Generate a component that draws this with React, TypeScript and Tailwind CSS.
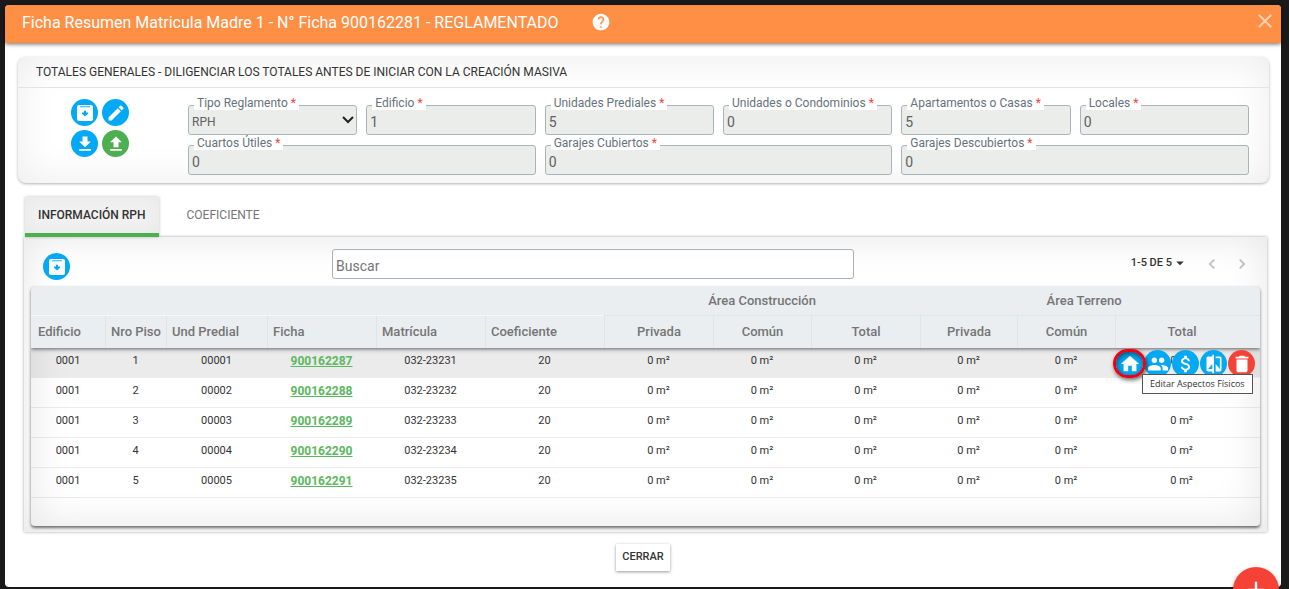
import type { ReactNode } from "react";
import clsx from "clsx";
import {
  MdAdd,
  MdArrowDropDown,
  MdAttachMoney,
  MdChevronLeft,
  MdChevronRight,
  MdClose,
  MdCompare,
  MdDelete,
  MdEdit,
  MdFileDownload,
  MdFileUpload,
  MdGroup,
  MdHelp,
  MdHome,
} from "react-icons/md";

const rows = [
  { edificio: "0001", piso: "1", und: "00001", ficha: "900162287", matricula: "032-23231", coef: "20" },
  { edificio: "0001", piso: "2", und: "00002", ficha: "900162288", matricula: "032-23232", coef: "20" },
  { edificio: "0001", piso: "3", und: "00003", ficha: "900162289", matricula: "032-23233", coef: "20" },
  { edificio: "0001", piso: "4", und: "00004", ficha: "900162290", matricula: "032-23234", coef: "20" },
  { edificio: "0001", piso: "5", und: "00005", ficha: "900162291", matricula: "032-23235", coef: "20" },
];

const textFields = [
  { id: "edificio", label: "Edificio", value: "1" },
  { id: "unidades", label: "Unidades Prediales", value: "5" },
  { id: "condominios", label: "Unidades o Condominios", value: "0" },
  { id: "apartamentos", label: "Apartamentos o Casas", value: "5" },
  { id: "locales", label: "Locales", value: "0" },
  { id: "cuartos", label: "Cuartos Útiles", value: "0", wide: true },
  { id: "cubiertos", label: "Garajes Cubiertos", value: "0", wide: true },
  { id: "descubiertos", label: "Garajes Descubiertos", value: "0", wide: true },
];

const areas = ["Privada", "Común", "Total", "Privada", "Común", "Total"];

function ArchiveIcon() {
  return (
    <svg viewBox="0 0 18 18" className="size-[18px]" fill="none" aria-hidden>
      <rect x="1" y="1" width="16" height="16" rx="2" fill="#fff" />
      <path d="M4 2.8h10" stroke="#03a9f4" strokeWidth=".9" />
      <path d="M8 6.8h2v1.7h2v1.2L9 12.4 6 9.700V8.500h2z" fill="#03a9f4" />
    </svg>
  );
}

function RoundButton({ label, color = "blue", children }: { label: string; color?: "blue" | "green" | "red"; children: ReactNode }) {
  return (
    <button
      type="button"
      aria-label={label}
      className={clsx(
        "flex size-[27px] shrink-0 items-center justify-center rounded-full text-white",
        color === "blue" && "bg-[#03a9f4]",
        color === "green" && "bg-[#4caf50]",
        color === "red" && "bg-[#f44336]",
      )}
    >
      {children}
    </button>
  );
}

function Field({ id, label, wide, children }: { id: string; label: string; wide?: boolean; children: ReactNode }) {
  return (
    <div className={clsx("relative", wide && "col-span-2")}>
      {children}
      <label htmlFor={id} className="absolute -top-2 left-1.5 bg-white px-[3px] text-[12px] leading-[13px] whitespace-nowrap text-[#66727b]">
        {label} <span className="text-[#f44336]">*</span>
      </label>
    </div>
  );
}

const control = "block h-[30px] w-full rounded-[3px] border border-[#a9b3ba] bg-[#eaedea] px-[3px] text-[#616161] outline-none";

function Totals() {
  return (
    <section className="rounded-lg bg-white shadow-[0_1px_3px_rgba(0,0,0,.3),inset_0_0_40px_rgba(0,0,0,.08)]">
      <h2 className="border-b border-[#e4e4e4] px-[18px] text-[12px] leading-[30px] text-[#333]">
        TOTALES GENERALES - DILIGENCIAR LOS TOTALES ANTES DE INICIAR CON LA CREACIÓN MASIVA
      </h2>
      <div className="flex pr-5 pb-2">
        <div className="w-[170px] shrink-0 pt-[11px] pl-[53px]">
          <div className="grid w-fit grid-cols-2 gap-1">
            <RoundButton label="Archivar">
              <ArchiveIcon />
            </RoundButton>
            <RoundButton label="Editar">
              <MdEdit className="size-5" />
            </RoundButton>
            <RoundButton label="Descargar">
              <MdFileDownload className="size-5" />
            </RoundButton>
            <RoundButton label="Subir" color="green">
              <MdFileUpload className="size-5" />
            </RoundButton>
          </div>
        </div>
        <div className="grid flex-1 grid-cols-6 gap-x-[9px] gap-y-2.5 pt-[17px]">
          <Field id="tipo" label="Tipo Reglamento">
            <select id="tipo" defaultValue="RPH" className={clsx(control, "appearance-none pt-1 text-[12px]")}>
              <option>RPH</option>
            </select>
            <svg viewBox="0 0 12 8" className="pointer-events-none absolute top-[11px] right-[3px] h-2 w-3" fill="none" stroke="#222" strokeWidth="2" aria-hidden>
              <path d="M1 1l5 5 5-5" />
            </svg>
          </Field>
          {textFields.map((f) => (
            <Field key={f.id} id={f.id} label={f.label} wide={f.wide}>
              <input id={f.id} defaultValue={f.value} className={clsx(control, "pt-1 text-[14px]")} />
            </Field>
          ))}
        </div>
      </div>
    </section>
  );
}

function RowActions() {
  return (
    <div className="absolute top-0.5 right-[5px] z-10 flex gap-px">
      <div className="relative">
        <RoundButton label="Editar Aspectos Físicos">
          <MdHome className="size-[22px]" />
        </RoundButton>
        <span className="pointer-events-none absolute -inset-x-[3px] -inset-y-px rounded-full border-[3px] border-[#f00010] shadow-[1px_2px_4px_rgba(0,0,0,.6),inset_1px_2px_5px_rgba(0,0,0,.5)]" />
      </div>
      <RoundButton label="Propietarios">
        <MdGroup className="size-[22px]" />
      </RoundButton>
      <RoundButton label="Avalúo">
        <MdAttachMoney className="size-[22px]" />
      </RoundButton>
      <RoundButton label="Comparar">
        <MdCompare className="size-5" />
      </RoundButton>
      <RoundButton label="Eliminar" color="red">
        <MdDelete className="size-[22px]" />
      </RoundButton>
      <div
        role="tooltip"
        className="absolute top-6 left-[26px] border border-[#555] bg-white px-[7px] font-['Open_Sans',sans-serif] text-[9px] leading-[18px] whitespace-nowrap text-[#333]"
      >
        Editar Aspectos Físicos
      </div>
    </div>
  );
}

function UnitsTable() {
  const th = "border-[#dfe4e4] font-medium";
  return (
    <div className="relative overflow-hidden rounded-[4px] bg-white pb-7 shadow-[0_2px_3px_rgba(0,0,0,.55)]">
      <table className="w-full table-fixed border-separate border-spacing-0 text-center text-[11px] text-[#333]">
        <colgroup>
          <col className="w-[74px]" />
          <col className="w-[61px]" />
          <col className="w-[101px]" />
          <col className="w-[109px]" />
          <col className="w-[109px]" />
          <col className="w-[119px]" />
          <col className="w-[109px]" />
          <col className="w-[98px]" />
          <col className="w-[109px]" />
          <col className="w-[97px]" />
          <col className="w-[98px]" />
          <col className="w-[145px]" />
        </colgroup>
        <thead className="relative z-10 bg-[#eaeef0] text-[13px] text-[#757575] shadow-[0_1px_4px_rgba(0,0,0,.6)]">
          <tr className="h-[30px]">
            <td colSpan={6} className="border-b border-[#f6f9f9]" />
            <th colSpan={3} className={clsx(th, "border-b")}>Área Construcción</th>
            <th colSpan={3} className={clsx(th, "border-b pr-3")}>Área Terreno</th>
          </tr>
          <tr className="h-8">
            <th className={clsx(th, "pl-[7px] text-left")}>Edificio</th>
            {["Nro Piso", "Und Predial", "Ficha", "Matrícula", "Coeficiente"].map((h) => (
              <th key={h} className={clsx(th, "border-l pl-[5px] text-left whitespace-nowrap")}>{h}</th>
            ))}
            {areas.map((h, i) => (
              <th key={i} className={clsx(th, "border-l", i === 5 && "pr-3")}>{h}</th>
            ))}
          </tr>
        </thead>
        <tbody>
          {rows.map((r, i) => (
            <tr key={r.ficha} className={clsx("h-[30px]", i === 0 && "bg-[#ebebeb]")}>
              {[r.edificio, r.piso, r.und].map((v, c) => (
                <td key={c} className="border-b border-[#ececec] pb-0.5">{v}</td>
              ))}
              <td className="border-b border-[#ececec] pb-0.5">
                <a href={`#${r.ficha}`} className="text-[12px] font-bold text-[#5cb860] underline">{r.ficha}</a>
              </td>
              {[r.matricula, r.coef].map((v, c) => (
                <td key={c} className="border-b border-[#ececec] pb-0.5">{v}</td>
              ))}
              {areas.map((_, c) => (
                <td key={c} className={clsx("border-b border-[#ececec] pb-0.5", c === 5 && "pr-3", i === 0 && c === 5 && "relative z-20")}>
                  0 m²
                  {i === 0 && c === 5 && <RowActions />}
                </td>
              ))}
            </tr>
          ))}
        </tbody>
      </table>
      <div className="pointer-events-none absolute inset-0 rounded-[4px] shadow-[inset_0_0_40px_rgba(0,0,0,.1)]" />
    </div>
  );
}

export default function App() {
  return (
    <div className="min-h-screen overflow-hidden bg-[#1a1a1a] pt-[5px] pr-2 pb-[3px] pl-[5px] font-[Roboto,sans-serif]">
      <main className="rounded-[4px] bg-white pb-4">
        <header className="relative flex h-[38px] items-center rounded-t-[4px] bg-[#ff8f45] pr-1 pl-[17px] text-white shadow-[0_1px_4px_rgba(0,0,0,.6)]">
          <h1 className="pb-0.5 text-[16px]">Ficha Resumen Matricula Madre 1 - N° Ficha 900162281 - REGLAMENTADO</h1>
          <button type="button" aria-label="Ayuda" className="mb-1 ml-8">
            <MdHelp className="size-5" />
          </button>
          <button type="button" aria-label="Cerrar ventana" className="mb-1.5 ml-auto text-white/60">
            <MdClose className="size-6" />
          </button>
        </header>

        <div className="px-3 pt-3.5 pl-[13px]">
          <Totals />
        </div>

        <div className="mt-3.5 flex pl-5 text-[12px]">
          <button type="button" className="h-10 border-b-4 border-[#4caf50] bg-[#f1f1f1] px-[13px] font-medium text-[#333] shadow-[0_0_3px_rgba(0,0,0,.25),inset_0_0_20px_rgba(0,0,0,.04)]">
            INFORMACIÓN RPH
          </button>
          <button type="button" className="h-9 px-7 text-[#757575]">
            COEFICIENTE
          </button>
        </div>

        <section className="mr-3.5 ml-[19px] bg-white px-[7px] pb-1.5 shadow-[0_0_3px_rgba(0,0,0,.35),inset_0_0_40px_rgba(0,0,0,.1)]">
          <div className="flex h-[49px] items-center">
            <div className="w-[24.5%] pt-2.5 pl-3">
              <RoundButton label="Archivar unidades">
                <ArchiveIcon />
              </RoundButton>
            </div>
            <input
              aria-label="Buscar"
              placeholder="Buscar"
              className="mt-1 h-[30px] w-[42.5%] rounded-[3px] border border-[#a9b0b8] bg-white/70 px-[3px] pt-1 text-[14px] outline-none placeholder:text-[#757575]"
            />
            <div className="flex flex-1 items-center justify-end pt-1 pr-2 text-[11px] text-[#bdbdbd]">
              <button type="button" className="mr-3 flex items-center font-medium text-[#333]">
                1-5 DE 5
                <MdArrowDropDown className="-ml-0.5 size-5 pb-0.5" />
              </button>
              <button type="button" aria-label="Página anterior" className="mr-2.5">
                <MdChevronLeft className="size-5" />
              </button>
              <button type="button" aria-label="Página siguiente">
                <MdChevronRight className="size-5" />
              </button>
            </div>
          </div>
          <UnitsTable />
        </section>

        <div className="mt-3 flex justify-center">
          <button type="button" className="h-[27px] bg-white px-1.5 text-[11px] font-medium text-[#333] shadow-[0_1px_3px_rgba(0,0,0,.4)]">
            CERRAR
          </button>
        </div>
      </main>

      <button
        type="button"
        aria-label="Agregar"
        className="fixed right-2.5 -bottom-6 flex size-[46px] items-center justify-center rounded-full bg-[#f44336] text-white shadow-[0_2px_4px_rgba(0,0,0,.4)]"
      >
        <MdAdd className="size-7" />
      </button>
    </div>
  );
}
